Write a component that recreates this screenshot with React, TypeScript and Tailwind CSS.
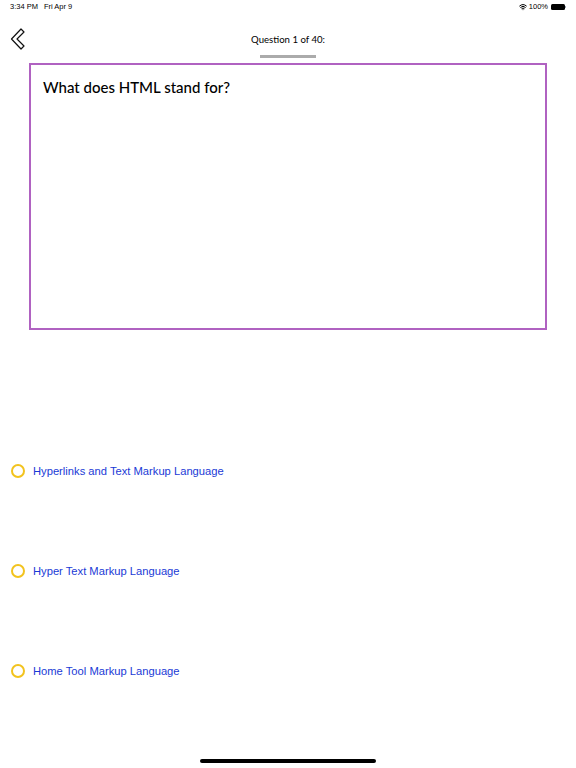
import { Wifi } from 'lucide-react';

const options = [
  'Hyperlinks and Text Markup Language',
  'Hyper Text Markup Language',
  'Home Tool Markup Language',
];

export default function App() {
  return (
    <div className="relative w-[576px] h-[768px] bg-white overflow-hidden" style={{ fontFamily: '"Liberation Sans", Arial, sans-serif' }}>
      {/* Barra de estado */}
      <div className="flex items-center justify-between h-[14px] px-[10px] text-[7.5px] text-black">
        <div className="flex gap-[6px]">
          <span>3:34 PM</span>
          <span>Fri Apr 9</span>
        </div>
        <div className="flex items-center gap-[2px]">
          <Wifi size={8} strokeWidth={3} />
          <span>100%</span>
          <div className="flex items-center ml-[1px]">
            <div className="w-[14px] h-[6px] rounded-[1.5px] bg-black" />
            <div className="w-[1px] h-[2px] bg-gray-400" />
          </div>
        </div>
      </div>

      {/* Encabezado */}
      <div className="relative h-[49px]">
        <svg className="absolute left-[9px] top-[14px]" width="16" height="22" viewBox="0 0 16 22" fill="none">
          <path d="M12 1 L15 4 L8 11 L15 18 L12 21 L2.5 11 Z" stroke="#111" strokeWidth="1.2" strokeLinejoin="round" />
        </svg>
        <div className="flex flex-col items-center pt-[19px]">
          <span className="text-[9.6px] text-black" style={{ fontFamily: '"Lato", "DejaVu Sans", sans-serif' }}>Question 1 of 40:</span>
          <div className="mt-[8px] w-[56px] h-[3px] bg-[#ababab]" />
        </div>
      </div>

      {/* Pregunta */}
      <div className="mx-[29px] h-[267px] border-2 border-[#b062c1] px-[12px] pt-[11px]">
        <p className="text-[15px] font-medium text-black" style={{ fontFamily: '"Lato", "DejaVu Sans", sans-serif' }}>
          What does HTML stand for?
        </p>
      </div>

      {/* Opciones */}
      <div className="flex flex-col pt-[133px] gap-[84px]">
        {options.map((opt) => (
          <div key={opt} className="flex items-center h-[16px] pl-[11px] gap-[8px]">
            <div className="w-[14px] h-[14px] rounded-full border-2 border-[#f2c31e]" />
            <span className="text-[11.2px] text-[#1a3ad6]">{opt}</span>
          </div>
        ))}
      </div>

      {/* Indicador de inicio */}
      <div className="absolute left-[200px] bottom-[5px] w-[176px] h-[4px] rounded-full bg-black" />
    </div>
  );
}
